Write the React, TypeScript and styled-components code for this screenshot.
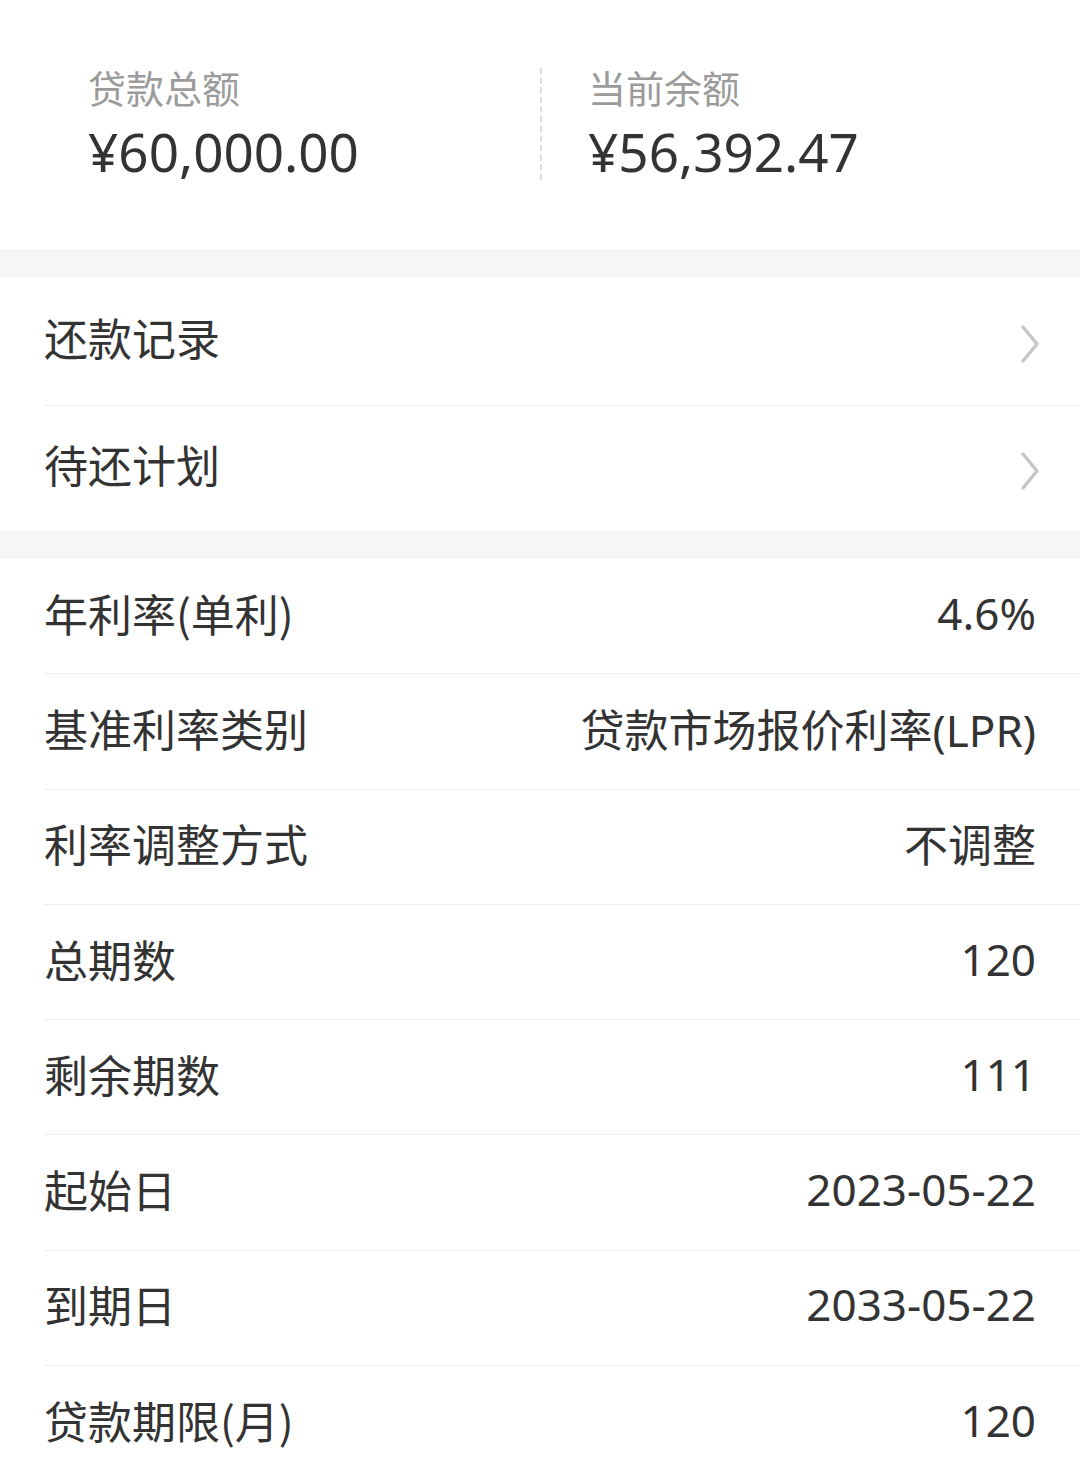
import React from "react";
import styled, { createGlobalStyle } from "styled-components";

const GlobalStyle = createGlobalStyle`
  html, body {
    margin: 0;
    padding: 0;
    background: #fff;
  }
  body {
    font-family: "Noto Sans", "Noto Sans CJK SC", sans-serif;
    color: #333;
  }
`;

const Page = styled.div`
  width: 1080px;
  background: #fff;
`;

const Summary = styled.div`
  display: flex;
  padding: 68px 0 69px 44px;
`;

const SummaryCol = styled.div<{ $divided?: boolean }>`
  flex: ${(p) => (p.$divided ? "1" : "0 0 496px")};
  box-sizing: border-box;
  padding-left: ${(p) => (p.$divided ? "46px" : "44px")};
  border-left: ${(p) => (p.$divided ? "2px dashed #dcdcdc" : "none")};
  height: 112px;
`;

const SummaryLabel = styled.div`
  font-family: "Noto Sans CJK SC", sans-serif;
  font-size: 38px;
  line-height: 38px;
  color: #9b9b9b;
`;

const SummaryAmount = styled.div`
  margin-top: 17px;
  font-size: 53px;
  line-height: 57px;
  color: #333;
`;

const Gap = styled.div<{ $h: number }>`
  height: ${(p) => p.$h}px;
  background: #f6f6f6;
`;

const List = styled.div`
  padding-left: 44px;
`;

const Row = styled.div<{ $h: number; $last?: boolean }>`
  display: flex;
  align-items: center;
  justify-content: space-between;
  box-sizing: border-box;
  height: ${(p) => p.$h}px;
  padding-right: 44px;
  padding-bottom: 7px;
  border-bottom: ${(p) => (p.$last ? "none" : "1.5px solid #ededed")};
`;

const Label = styled.span`
  font-family: "Noto Sans CJK SC", sans-serif;
  font-size: 44px;
  color: #333;
`;

const Value = styled.span`
  font-size: 44px;
  color: #333;
`;

const ChevronIcon = styled.svg`
  margin-right: -4px;
  margin-top: 13px;
`;

const Chevron = () => (
  <ChevronIcon width="20" height="38" viewBox="0 0 20 38">
    <polyline
      points="3,2 17,19 3,36"
      fill="none"
      stroke="#c6c6c6"
      strokeWidth="3.4"
      strokeLinecap="round"
      strokeLinejoin="round"
    />
  </ChevronIcon>
);

const details: [string, string][] = [
  ["年利率(单利)", "4.6%"],
  ["基准利率类别", "贷款市场报价利率(LPR)"],
  ["利率调整方式", "不调整"],
  ["总期数", "120"],
  ["剩余期数", "111"],
  ["起始日", "2023-05-22"],
  ["到期日", "2033-05-22"],
  ["贷款期限(月)", "120"],
];

const App: React.FC = () => {
  return (
    <Page>
      <GlobalStyle />
      <Summary>
        <SummaryCol>
          <SummaryLabel>贷款总额</SummaryLabel>
          <SummaryAmount>¥60,000.00</SummaryAmount>
        </SummaryCol>
        <SummaryCol $divided>
          <SummaryLabel>当前余额</SummaryLabel>
          <SummaryAmount>¥56,392.47</SummaryAmount>
        </SummaryCol>
      </Summary>

      <Gap $h={28} />
      <List>
        <Row $h={128.5}>
          <Label>还款记录</Label>
          <Chevron />
        </Row>
        <Row $h={124.5} $last>
          <Label>待还计划</Label>
          <Chevron />
        </Row>
      </List>
      <Gap $h={29} />

      <List>
        {details.map(([label, value], i) => (
          <Row key={label} $h={115.3} $last={i === details.length - 1}>
            <Label>{label}</Label>
            <Value>{value}</Value>
          </Row>
        ))}
      </List>
    </Page>
  );
};

export default App;
